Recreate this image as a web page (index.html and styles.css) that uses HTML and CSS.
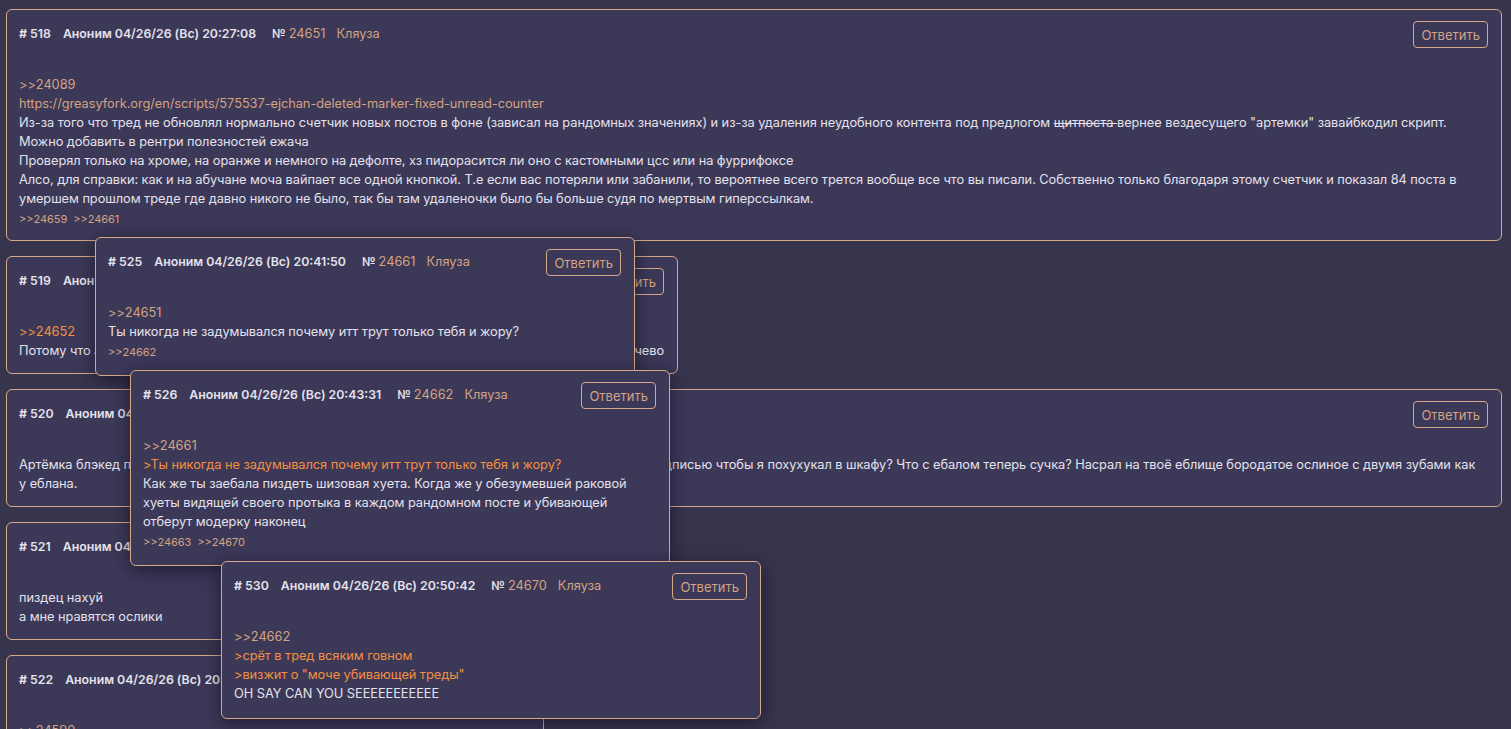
FILE: index.html
```html
<!DOCTYPE html>
<html lang="ru">
<head>
<meta charset="utf-8">
<title>Тред</title>
<link rel="stylesheet" href="styles.css">
</head>
<body>
<main class="thread">

  <article class="post">
    <header class="post-head">
      <span class="num"><b>#</b> 518</span>
      <span class="who">Аноним 04/26/26 (Вс) 20:27:08</span>
      <span class="no">№ <a class="ref">24651</a></span>
      <span class="tag">Кляуза</span>
      <button class="reply-btn">Ответить</button>
    </header>
    <div class="post-body">
      <a class="link">&gt;&gt;24089</a><br>
      <a class="link">https://greasyfork.org/en/scripts/575537-ejchan-deleted-marker-fixed-unread-counter</a><br>
      Из-за того что тред не обновлял нормально счетчик новых постов в фоне (зависал на рандомных значениях) и из-за удаления неудобного контента под предлогом <s>щитпоста </s>вернее вездесущего "артемки" завайбкодил скрипт.<br>
      Можно добавить в рентри полезностей ежача<br>
      Проверял только на хроме, на оранже и немного на дефолте, хз пидорасится ли оно с кастомными цсс или на фуррифоксе<br>
      Алсо, для справки: как и на абучане моча вайпает все одной кнопкой. Т.е если вас потеряли или забанили, то вероятнее всего трется вообще все что вы писали. Собственно только благодаря этому счетчик и показал 84 поста в умершем прошлом треде где давно никого не было, так бы там удаленочки было бы больше судя по мертвым гиперссылкам.
    </div>
    <div class="backlinks"><a>&gt;&gt;24659</a><a>&gt;&gt;24661</a></div>
  </article>

  <article class="post">
    <header class="post-head">
      <span class="num"><b>#</b> 519</span>
      <span class="who">Аноним 04/26/26 (Вс) 20:38:12</span>
      <span class="no">№ <a class="ref">24653</a></span>
      <span class="tag">Кляуза</span>
      <button class="reply-btn">Ответить</button>
    </header>
    <div class="post-body">
      <a class="link hot">&gt;&gt;24652</a><br>
      Потому что артемка единственный кто пишет что-то кроме шизы, а остальные же только ноют ничево
    </div>
  </article>

  <article class="post">
    <header class="post-head">
      <span class="num"><b>#</b> 520</span>
      <span class="who">Аноним 04/26/26 (Вс) 20:39:05</span>
      <span class="no">№ <a class="ref">24655</a></span>
      <span class="tag">Кляуза</span>
      <button class="reply-btn">Ответить</button>
    </header>
    <div class="post-body">
      Артёмка блэкед пидор ты чё опять пришёл сюда со своей тупейшей шизой и дурацкой аватаркой с подписью чтобы я похухукал в шкафу? Что с ебалом теперь сучка? Насрал на твоё еблище бородатое ослиное с двумя зубами как у&nbsp;еблана.
    </div>
  </article>

  <article class="post">
    <header class="post-head">
      <span class="num"><b>#</b> 521</span>
      <span class="who">Аноним 04/26/26 (Вс) 20:40:17</span>
      <span class="no">№ <a class="ref">24657</a></span>
      <span class="tag">Кляуза</span>
      <button class="reply-btn">Ответить</button>
    </header>
    <div class="post-body">
      пиздец нахуй<br>
      а мне нравятся ослики
    </div>
  </article>

  <article class="post">
    <header class="post-head">
      <span class="num"><b>#</b> 522</span>
      <span class="who">Аноним 04/26/26 (Вс) 20:40:44</span>
      <span class="no">№ <a class="ref">24658</a></span>
      <span class="tag">Кляуза</span>
      <button class="reply-btn">Ответить</button>
    </header>
    <div class="post-body">
      <a class="link">&gt;&gt;24590</a><br>
      ну и где
    </div>
  </article>

</main>

<!-- reply previews opened from the backlinks -->
<article class="post preview preview-525">
  <header class="post-head">
    <span class="num"><b>#</b> 525</span>
    <span class="who">Аноним 04/26/26 (Вс) 20:41:50</span>
    <span class="no">№ <a class="ref">24661</a></span>
    <span class="tag">Кляуза</span>
    <button class="reply-btn">Ответить</button>
  </header>
  <div class="post-body">
    <a class="link">&gt;&gt;24651</a><br>
    Ты никогда не задумывался почему итт трут только тебя и жору?
  </div>
  <div class="backlinks"><a>&gt;&gt;24662</a></div>
</article>

<article class="post preview preview-526">
  <header class="post-head">
    <span class="num"><b>#</b> 526</span>
    <span class="who">Аноним 04/26/26 (Вс) 20:43:31</span>
    <span class="no">№ <a class="ref">24662</a></span>
    <span class="tag">Кляуза</span>
    <button class="reply-btn">Ответить</button>
  </header>
  <div class="post-body">
    <a class="link">&gt;&gt;24661</a><br>
    <span class="quote">&gt;Ты никогда не задумывался почему итт трут только тебя и жору?</span><br>
    Как же ты заебала пиздеть шизовая хуета. Когда же у обезумевшей раковой<br>
    хуеты видящей своего протыка в каждом рандомном посте и убивающей<br>
    отберут модерку наконец
  </div>
  <div class="backlinks"><a>&gt;&gt;24663</a><a>&gt;&gt;24670</a></div>
</article>

<article class="post preview preview-530">
  <header class="post-head">
    <span class="num"><b>#</b> 530</span>
    <span class="who">Аноним 04/26/26 (Вс) 20:50:42</span>
    <span class="no">№ <a class="ref">24670</a></span>
    <span class="tag">Кляуза</span>
    <button class="reply-btn">Ответить</button>
  </header>
  <div class="post-body">
    <a class="link">&gt;&gt;24662</a><br>
    <span class="quote">&gt;срёт в тред всяким говном</span><br>
    <span class="quote">&gt;визжит о "моче убивающей треды"</span><br>
    OH SAY CAN YOU SEEEEEEEEEEE
  </div>
</article>
</body>
</html>
```

FILE: styles.css
```css
html, body {
  margin: 0;
  height: 100%;
  overflow: hidden;
}

body {
  background: #37344e;
  color: #e4e2ec;
  font-family: Inter, "Noto Sans", sans-serif;
  font-size: 12.8px;
  letter-spacing: -0.05px;
  line-height: 19px;
  position: relative;
}

.thread {
  display: flex;
  flex-direction: column;
  align-items: flex-start;
  gap: 15px;
  padding: 9px 9px 0 6px;
}

.post {
  box-sizing: border-box;
  width: fit-content;
  min-width: 538px;
  max-width: 100%;
  background: #3c3858;
  border: 1px solid #d6a98a;
  border-radius: 6px;
  padding: 11px 13px 13px 12px;
}

.post-head {
  display: flex;
  align-items: center;
  height: 27px;
  font-size: 12.3px;
  font-weight: 600;
  letter-spacing: 0;
  white-space: nowrap;
}

.post-head > span {
  position: relative;
  top: -1px;
}

.num b { font-weight: 700; }

.num { margin-right: 12px; }

.no { margin-left: 16px; }

.ref {
  color: #d3a382;
  font-size: 12.8px;
  font-weight: 400;
}

.tag {
  margin-left: 11px;
  color: #d3a382;
  font-size: 12.8px;
  font-weight: 400;
}

.reply-btn {
  margin-left: auto;
  height: 27px;
  padding: 0 7px;
  background: transparent;
  border: 1px solid #d6a98a;
  border-radius: 4px;
  color: #d3a382;
  font-family: inherit;
  font-size: 13px;
  font-weight: 400;
}

.post-body {
  margin-top: 27px;
}

.link { color: #d3a382; }

.link.hot, .quote { color: #f39040; }

s { text-decoration-thickness: 1px; }

.backlinks {
  margin-top: 4px;
  font-size: 11px;
  line-height: 15px;
  display: flex;
  gap: 6px;
}

.backlinks a { color: #d3a382; }

.preview {
  position: absolute;
  width: 540px;
  min-width: 0;
  padding-bottom: 15px;
  box-shadow: 0 4px 18px rgba(10, 8, 20, 0.55);
}

.preview-525 { left: 95px; top: 237px; }
.preview-526 { left: 130px; top: 370px; }
.preview-530 { left: 221px; top: 561px; }
```
